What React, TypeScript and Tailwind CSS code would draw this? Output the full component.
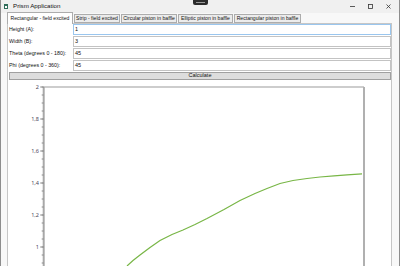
import React from "react";

const tabs = [
  { label: "Rectangular - field excited", w: "w-[66px]" },
  { label: "Strip - field excited", w: "w-[46px]" },
  { label: "Circular piston in baffle", w: "w-[56px]" },
  { label: "Elliptic piston in baffle", w: "w-[55px]" },
  { label: "Rectangular piston in baffle", w: "w-[67px]" },
];

const fields = [
  { label: "Height (A):", value: "1" },
  { label: "Width (B):", value: "3" },
  { label: "Theta (degrees 0 - 180):", value: "45" },
  { label: "Phi (degrees 0 - 360):", value: "45" },
];

// chart coords are relative to the svg (page x - 8, page y - 80)
const AXIS_X = 35.7;
const TOP = 7;
const RIGHT = 356;
const yOf = (v: number) => TOP + (2 - v) * 160;

const curve: [number, number][] = [
  [127, 266], [133, 260.5], [140, 255], [150, 247.5], [160, 240.5], [172, 234.5],
  [183, 230], [195, 224.5], [207, 218.5], [224, 209.5], [240, 200.5], [255, 193.5],
  [267, 188.5], [280, 183.5], [293, 180.5], [307, 178.5], [320, 177], [334, 175.8],
  [347, 174.8], [362, 173.8],
];

function Chart() {
  const majors = [2, 1.8, 1.6, 1.4, 1.2, 1];
  const minors: number[] = [];
  for (let i = 0; i <= 24; i++) minors.push(2 - i * 0.05);
  const d = curve.map(([x, y], i) => `${i ? "L" : "M"}${x - 8} ${y - 80}`).join(" ");
  return (
    <svg width="383" height="186" className="block">
      <line x1={AXIS_X} y1={TOP} x2={RIGHT} y2={TOP} stroke="#bdbdbd" strokeWidth="1.3" />
      <line x1={RIGHT} y1={TOP} x2={RIGHT} y2={186} stroke="#b0b0b0" strokeWidth="2" />
      <line x1={AXIS_X} y1={TOP} x2={AXIS_X} y2={186} stroke="#a8a8a8" strokeWidth="2" />
      {minors.map((v) => (
        <line key={v} x1={AXIS_X - 2} y1={yOf(v)} x2={AXIS_X} y2={yOf(v)} stroke="#8c8c8c" strokeWidth="1" />
      ))}
      {majors.map((v) => (
        <g key={v}>
          <line x1={AXIS_X - 3.5} y1={yOf(v)} x2={AXIS_X} y2={yOf(v)} stroke="#8c8c8c" strokeWidth="1" />
          <text
            x={31}
            y={yOf(v) + 2}
            textAnchor="end"
            fontSize="5.5"
            fill="#4a4458"
            fontFamily="Noto Sans, sans-serif"
          >
            {String(Math.round(v * 10) / 10).replace(".", ",")}
          </text>
        </g>
      ))}
      <path d={d} fill="none" stroke="#78b646" strokeWidth="1.2" />
    </svg>
  );
}

export default function App() {
  return (
    <div className="relative flex h-[266px] w-[400px] flex-col overflow-hidden border-x border-[#8d8d8d] bg-[#f8f8f8] font-['Liberation_Sans',sans-serif] text-[#111]">
      <div className="absolute left-[192px] top-0 h-[5px] w-[15px] rounded-b-[2px] bg-[#2b2b2b] px-[3px] pt-[2px]">
        <div className="h-[1px] w-full bg-[#9a9a9a]" />
      </div>

      <div className="flex h-[13px] shrink-0 items-center bg-[#f0f0f0]">
        <div className="ml-[3px] flex h-[5px] w-[4px] items-center justify-center bg-[#2f6d5a]">
          <div className="h-[2px] w-[2px] bg-white" />
        </div>
        <span className="ml-[5px] whitespace-nowrap text-[6.2px] leading-none">Prism Application</span>
        <div className="ml-auto flex items-center gap-[13px] pr-[8px]">
          <svg width="5" height="5">
            <line x1="0" y1="2.5" x2="5" y2="2.5" stroke="#333" strokeWidth="0.8" />
          </svg>
          <svg width="5" height="5">
            <rect x="0.5" y="0.5" width="4" height="4" fill="none" stroke="#333" strokeWidth="0.8" />
          </svg>
          <svg width="5" height="5">
            <path d="M0.5 0.5 L4.5 4.5 M4.5 0.5 L0.5 4.5" stroke="#333" strokeWidth="0.8" />
          </svg>
        </div>
      </div>

      <div className="flex h-[10px] shrink-0 items-end pl-[6px]">
        {tabs.map((t, i) =>
          i === 0 ? (
            <div
              key={t.label}
              className={`${t.w} relative z-10 -mb-px flex h-[12px] items-center justify-center whitespace-nowrap border border-b-0 border-[#acacac] bg-white text-[5.1px] leading-none`}
            >
              {t.label}
            </div>
          ) : (
            <div
              key={t.label}
              className={`${t.w} ml-px flex h-[9px] items-center justify-center whitespace-nowrap border border-[#acacac] bg-[#ececec] text-[5.1px] leading-none`}
            >
              {t.label}
            </div>
          )
        )}
      </div>

      <div className="ml-[6px] mr-[7px] flex flex-1 flex-col border border-b-0 border-[#c6c6c6] bg-white">
        <div className="grid grid-cols-[65px_1fr]">
          {fields.map((f, i) => (
            <React.Fragment key={f.label}>
              <div className="flex h-[12px] items-center whitespace-nowrap pl-[1px] text-[5.3px] leading-none">
                {f.label}
              </div>
              <div className="h-[12px] pb-[1px]">
                <div
                  className={`flex h-[11px] items-center border px-[1px] text-[5.5px] leading-none ${
                    i === 0 ? "border-[#9ac6ee]" : "border-[#c3c3c3]"
                  }`}
                >
                  {f.value}
                </div>
              </div>
            </React.Fragment>
          ))}
        </div>
        <div className="ml-[1px] flex h-[8px] items-center justify-center border border-[#a0a0a0] bg-[#dddddd] text-[5.5px] leading-none">
          Calculate
        </div>
        <Chart />
      </div>
    </div>
  );
}
